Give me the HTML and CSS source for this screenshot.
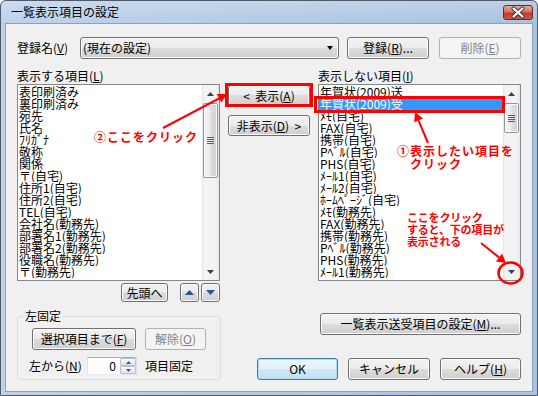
FILE: index.html
```html
<!DOCTYPE html>
<html lang="ja">
<head>
<meta charset="utf-8">
<title>一覧表示項目の設定</title>
<link rel="stylesheet" href="styles.css">
</head>
<body>
<div class="window">
  <div class="titlebar">
    <span class="title">一覧表示項目の設定</span>
    <span class="close">
      <svg width="30" height="15" viewBox="0 0 30 15">
        <path d="M10.5 3.5 L19.5 11.5 M19.5 3.5 L10.5 11.5" stroke="#3a3a3a" stroke-width="4.2" stroke-linecap="round"/>
        <path d="M10.5 3.5 L19.5 11.5 M19.5 3.5 L10.5 11.5" stroke="#ffffff" stroke-width="2.2" stroke-linecap="round"/>
      </svg>
    </span>
  </div>
  <div class="client">
    <div class="row1">
      <span class="lbl-reg">登録名(<u>V</u>)</span>
      <div class="combo"><span class="combo-text">(現在の設定)</span><span class="combo-arrow"></span></div>
      <button class="btn btn-reg">登録(<u>R</u>)...</button>
      <button class="btn btn-del" disabled>削除(<u>E</u>)</button>
    </div>

    <div class="main">
      <div class="col">
        <div class="cap">表示する項目(<u>L</u>)</div>
        <div class="listbox">
          <ul class="items">
            <li>表印刷済み</li>
            <li>裏印刷済み</li>
            <li>宛先</li>
            <li>氏名</li>
            <li>ﾌﾘｶﾞﾅ</li>
            <li>敬称</li>
            <li>関係</li>
            <li>〒(自宅)</li>
            <li>住所1(自宅)</li>
            <li>住所2(自宅)</li>
            <li>TEL(自宅)</li>
            <li>会社名(勤務先)</li>
            <li>部署名1(勤務先)</li>
            <li>部署名2(勤務先)</li>
            <li>役職名(勤務先)</li>
            <li>〒(勤務先)</li>
          </ul>
          <div class="vscroll">
            <div class="sb-btn"><svg width="7" height="4" viewBox="0 0 7 4"><path d="M3.5 0 L7 4 L0 4Z" fill="#404040"/></svg></div>
            <div class="sb-track"><div class="thumb thumb-left"><svg width="7" height="7" viewBox="0 0 7 7"><path d="M0 0.5H7M0 2.5H7M0 4.5H7M0 6.5H7" stroke="#5f5f5f" stroke-width="1"/></svg></div></div>
            <div class="sb-btn"><svg width="7" height="4" viewBox="0 0 7 4"><path d="M0 0 L7 0 L3.5 4Z" fill="#404040"/></svg></div>
          </div>
        </div>
        <div class="tools">
          <button class="btn btn-top">先頭へ</button>
          <button class="btn btn-nav"><svg width="9" height="5" viewBox="0 0 9 5"><path d="M4.5 0 L9 5 L0 5Z" fill="#1c5a96"/></svg></button>
          <button class="btn btn-nav"><svg width="9" height="5" viewBox="0 0 9 5"><path d="M0 0 L9 0 L4.5 5Z" fill="#1c5a96"/></svg></button>
        </div>
      </div>

      <div class="col-mid">
        <button class="btn btn-mid">&lt;&nbsp;&nbsp;表示(<u>A</u>)</button>
        <button class="btn btn-mid">非表示(<u>D</u>)&nbsp;&nbsp;&gt;</button>
      </div>

      <div class="col">
        <div class="cap">表示しない項目(<u>I</u>)</div>
        <div class="listbox">
          <ul class="items">
            <li>年賀状(2009)送</li>
            <li class="sel">年賀状(2009)受</li>
            <li>ﾒﾓ(自宅)</li>
            <li>FAX(自宅)</li>
            <li>携帯(自宅)</li>
            <li>Pﾍﾞﾙ(自宅)</li>
            <li>PHS(自宅)</li>
            <li>ﾒｰﾙ1(自宅)</li>
            <li>ﾒｰﾙ2(自宅)</li>
            <li>ﾎｰﾑﾍﾟｰｼﾞ(自宅)</li>
            <li>ﾒﾓ(勤務先)</li>
            <li>FAX(勤務先)</li>
            <li>携帯(勤務先)</li>
            <li>Pﾍﾞﾙ(勤務先)</li>
            <li>PHS(勤務先)</li>
            <li>ﾒｰﾙ1(勤務先)</li>
          </ul>
          <div class="vscroll">
            <div class="sb-btn"><svg width="7" height="4" viewBox="0 0 7 4"><path d="M3.5 0 L7 4 L0 4Z" fill="#404040"/></svg></div>
            <div class="sb-track"><div class="thumb thumb-right"><svg width="7" height="7" viewBox="0 0 7 7"><path d="M0 0.5H7M0 2.5H7M0 4.5H7M0 6.5H7" stroke="#5f5f5f" stroke-width="1"/></svg></div></div>
            <div class="sb-btn"><svg width="7" height="4" viewBox="0 0 7 4"><path d="M0 0 L7 0 L3.5 4Z" fill="#404040"/></svg></div>
          </div>
        </div>
      </div>
    </div>

    <div class="bottom">
      <fieldset class="group">
        <legend>左固定</legend>
        <div class="g-row1">
          <button class="btn btn-sel">選択項目まで(<u>F</u>)</button>
          <button class="btn btn-rel" disabled>解除(<u>O</u>)</button>
        </div>
        <div class="g-row2">
          <span class="g-lbl">左から(<u>N</u>)</span>
          <div class="spin">
            <span class="spin-val">0</span>
            <span class="spin-btns">
              <span class="spin-b"><svg width="5" height="3" viewBox="0 0 5 3"><path d="M2.5 0 L5 3 L0 3Z" fill="#2a5e94"/></svg></span>
              <span class="spin-b"><svg width="5" height="3" viewBox="0 0 5 3"><path d="M0 0 L5 0 L2.5 3Z" fill="#2a5e94"/></svg></span>
            </span>
          </div>
          <span class="g-fix">項目固定</span>
        </div>
      </fieldset>
      <div class="bottom-right">
        <button class="btn btn-wide">一覧表示送受項目の設定(<u>M</u>)...</button>
        <div class="dlg-buttons">
          <button class="btn btn-ok">OK</button>
          <button class="btn btn-cancel">キャンセル</button>
          <button class="btn btn-help">ヘルプ(<u>H</u>)</button>
        </div>
      </div>
    </div>
  </div>
</div>

<svg class="marks" width="538" height="396" viewBox="0 0 538 396">
  <g fill="none" stroke="#ff0000" stroke-width="3">
    <rect x="226.5" y="84.5" width="85" height="21"/>
    <rect x="315.5" y="97.5" width="188" height="14"/>
  </g>
  <g stroke="#ff0000" stroke-width="2">
    <line x1="163" y1="128" x2="220" y2="98"/>
    <line x1="428" y1="143" x2="418.5" y2="120.3"/>
    <line x1="481" y1="243" x2="499" y2="257.4"/>
  </g>
  <g fill="#ff0000">
    <polygon points="227,94 221.4,102.6 216.8,93.9"/>
    <polygon points="415,112 423,118.5 414.2,122.3"/>
    <polygon points="506,263 496,261.4 502,253.6"/>
  </g>
  <ellipse cx="510.5" cy="273" rx="12" ry="10.5" fill="none" stroke="#ff0000" stroke-width="2.5"/>
</svg>
<div class="note note-2">②ここをクリック</div>
<div class="note note-1">①表示したい項目を<br>　クリック</div>
<div class="note note-3">ここをクリック<br>すると、下の項目が<br>表示される</div>
</body>
</html>
```
FILE: styles.css
```css
* { box-sizing: border-box; }
html, body { margin: 0; padding: 0; }
body {
  position: relative;
  width: 538px;
  height: 396px;
  overflow: hidden;
  font-family: "Noto Sans CJK JP", "Noto Sans", sans-serif;
  font-size: 12px;
  color: #000;
  background: #fff;
}
u { text-decoration: underline; text-underline-offset: 1px; }

.window {
  width: 538px;
  height: 396px;
  border: 1px solid #4e5a6a;
  border-radius: 6px 6px 0 0;
  background:
    linear-gradient(to bottom, rgba(255,255,255,0.22), rgba(255,255,255,0) 22px),
    linear-gradient(to right, #bdd2ea, #a9c2df);
  padding: 0 4px 3px 4px;
  display: flex;
  flex-direction: column;
}
.titlebar {
  height: 22px;
  flex: none;
  display: flex;
  align-items: center;
  justify-content: space-between;
  padding-left: 6px;
}
.title { font-size: 12px; line-height: 14px; color: #000; }
.close {
  width: 30px;
  height: 15px;
  border: 1px solid #6a2a26;
  border-radius: 3px;
  background: linear-gradient(to bottom, #e9aa9c 0%, #d9705e 45%, #c03c28 55%, #cc5a44 100%);
  display: flex;
  align-items: center;
  justify-content: center;
}
.close svg { display: block; margin: -1px; }

.client {
  flex: 1;
  border: 1px solid #8aa0bd;
  background: #f0f0f0;
  padding: 0 11px;
  display: flex;
  flex-direction: column;
}

/* buttons */
.btn {
  font: inherit;
  font-size: 12px;
  color: #000;
  height: 22px;
  padding: 0;
  margin: 0;
  border: 1px solid #707070;
  border-radius: 3px;
  background: linear-gradient(to bottom, #f2f2f2 0%, #ebebeb 50%, #dddddd 50%, #cfcfcf 100%);
  box-shadow: inset 0 0 0 1px #fbfbfb;
  line-height: 18px;
  text-align: center;
  white-space: nowrap;
  display: flex;
  align-items: center;
  justify-content: center;
}
.btn:disabled {
  border-color: #adb2b5;
  background: #f4f4f4;
  color: #838383;
  box-shadow: none;
}

.row1 {
  margin-top: 13px;
  height: 22px;
  display: flex;
  align-items: center;
}
.lbl-reg { width: 63px; line-height: 14px; }
.combo {
  width: 259px;
  height: 22px;
  border: 1px solid #707070;
  border-radius: 3px;
  background: linear-gradient(to bottom, #f2f2f2 0%, #ebebeb 50%, #dddddd 50%, #cfcfcf 100%);
  box-shadow: inset 0 0 0 1px #fbfbfb;
  display: flex;
  align-items: center;
  padding-left: 2px;
}
.combo-text { flex: 1; line-height: 14px; }
.combo-arrow {
  width: 0;
  height: 0;
  border-left: 3.5px solid transparent;
  border-right: 3.5px solid transparent;
  border-top: 4px solid #000;
  margin-right: 5px;
}
.btn-reg { width: 82px; margin-left: 8px; }
.btn-del { width: 82px; margin-left: 10px; }

.main {
  margin-top: 9px;
  display: grid;
  grid-template-columns: 203px 82px 203px;
  column-gap: 8px;
  align-items: start;
}
.col { display: flex; flex-direction: column; }
.cap { height: 16px; line-height: 14px; padding-top: 1px; }
.listbox {
  height: 197px;
  border: 1px solid #828790;
  background: #fff;
  display: flex;
}
.items {
  flex: 1;
  list-style: none;
  margin: 0;
  padding: 1px 0 0 0;
  overflow: hidden;
}
.items li {
  height: 12px;
  line-height: 12px;
  padding-left: 1px;
  white-space: nowrap;
  overflow: hidden;
}
.items li.sel { background: #3399ff; color: #fff; }

.vscroll {
  width: 17px;
  flex: none;
  display: flex;
  flex-direction: column;
  background: linear-gradient(to right, #e3e3e3 0, #f3f3f3 2px, #f3f3f3 14px, #e6e6e6 100%);
}
.sb-btn {
  height: 17px;
  flex: none;
  display: flex;
  align-items: center;
  justify-content: center;
}
.sb-btn svg { display: block; }
.sb-track { flex: 1; padding-top: 1px; }
.thumb {
  width: 15px;
  margin-left: 1px;
  border: 1px solid #959595;
  border-radius: 2px;
  background: linear-gradient(to right, #f6f6f6 0%, #ececec 45%, #dcdcdc 55%, #d2d2d2 100%);
  box-shadow: inset 0 0 0 1px #fafafa;
  display: flex;
  align-items: center;
  justify-content: center;
}
.thumb svg { display: block; }
.thumb-left { height: 75px; }
.thumb-right { height: 30px; }

.tools {
  margin-top: 2px;
  height: 19px;
  display: flex;
  justify-content: flex-end;
}
.tools .btn { height: 19px; }
.btn-top { width: 47px; margin-right: 10px; }
.btn-nav { width: 19px; margin-left: 2px; }
.btn-nav svg { display: block; }

.col-mid {
  padding-top: 17px;
  display: flex;
  flex-direction: column;
  gap: 9px;
}
.btn-mid { width: 82px; height: 21px; }

.bottom {
  margin-top: 7px;
  display: flex;
  justify-content: space-between;
  align-items: flex-start;
}
.group {
  width: 204px;
  margin: 0;
  padding: 5px 0 4px 0;
  border: 1px solid #d5dfe5;
  border-radius: 3px;
  min-width: 0;
}
.group legend {
  padding: 0 2px;
  margin-left: 5px;
  line-height: 14px;
  font-size: 12px;
}
.g-row1 {
  display: flex;
  gap: 9px;
  padding-left: 14px;
}
.btn-sel { width: 104px; }
.btn-rel { width: 61px; }
.g-row2 {
  margin-top: 7px;
  height: 18px;
  display: flex;
  align-items: center;
  padding-left: 11px;
}
.g-lbl { width: 58px; line-height: 14px; }
.spin {
  width: 50px;
  height: 18px;
  border: 1px solid;
  border-color: #abadb3 #dbdfe6 #e3e9ef #e2e3ea;
  background: #fff;
  display: flex;
}
.spin-val { flex: 1; text-align: right; padding-right: 4px; line-height: 16px; }
.spin-btns { width: 16px; display: flex; flex-direction: column; }
.spin-b {
  flex: 1;
  border: 1px solid #b9c2cc;
  border-radius: 1px;
  background: linear-gradient(to bottom, #f8f9fa, #dfe4ea);
  display: flex;
  align-items: center;
  justify-content: center;
}
.spin-b svg { display: block; }
.g-fix { margin-left: 8px; line-height: 14px; }

.bottom-right {
  width: 264px;
  padding-top: 4px;
  display: flex;
  flex-direction: column;
  align-items: flex-end;
}
.btn-wide { width: 201px; }
.dlg-buttons {
  margin-top: 23px;
  width: 264px;
  display: flex;
  gap: 10px;
}
.btn-ok {
  width: 81px;
  border-color: #3c7fb1;
  background: linear-gradient(to bottom, #eef6fb 0%, #e3f0f8 50%, #d2e7f4 50%, #c6e0f0 100%);
  box-shadow: inset 0 0 0 1px #a9dcf5;
}
.btn-cancel { width: 82px; }
.btn-help { width: 81px; }

/* annotations */
.marks {
  position: absolute;
  left: 0;
  top: 0;
  pointer-events: none;
}
.note {
  position: absolute;
  color: #ff0000;
  font-weight: 700;
  white-space: nowrap;
}
.note-2 { left: 94px; top: 129px; font-size: 12px; line-height: 16px; letter-spacing: 1px; }
.note-1 { left: 397px; top: 144px; font-size: 12px; line-height: 13px; letter-spacing: 1px; }
.note-3 { left: 407px; top: 211px; font-size: 11px; line-height: 12px; letter-spacing: -0.2px; }
```
